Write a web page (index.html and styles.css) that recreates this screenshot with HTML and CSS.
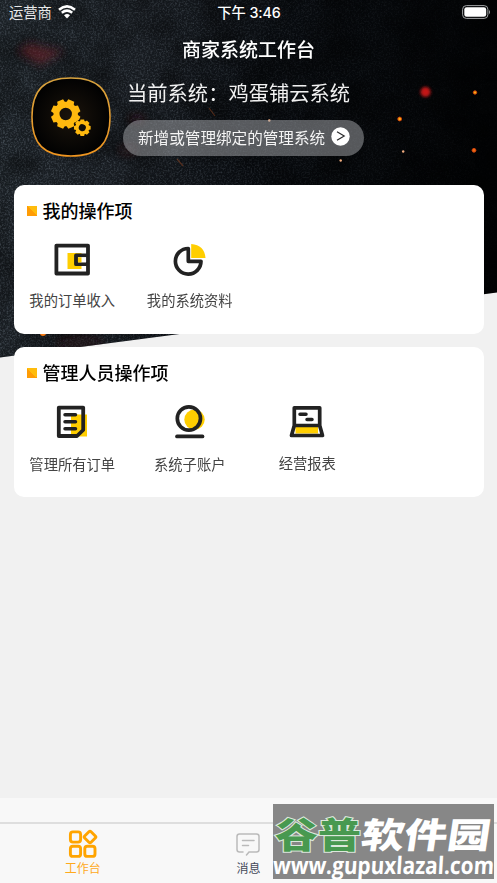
FILE: index.html
```html
<!DOCTYPE html>
<html lang="zh-CN">
<head>
<meta charset="utf-8">
<title>商家系统工作台</title>
<link rel="stylesheet" href="styles.css">
</head>
<body>
<div class="app">
  <svg class="scene" viewBox="0 0 497 360" aria-hidden="true">
    <defs>
      <linearGradient id="night" x1="0" y1="0" x2="1" y2="0.15">
        <stop offset="0" stop-color="#1c2227"/><stop offset=".3" stop-color="#171b20"/><stop offset=".55" stop-color="#090c10"/><stop offset="1" stop-color="#020304"/>
      </linearGradient>
      <linearGradient id="fade"><stop offset="0" stop-color="#aaa"/><stop offset=".35" stop-color="#777"/><stop offset=".65" stop-color="#333"/><stop offset="1" stop-color="#0a0a0a"/></linearGradient>
      <mask id="fademask"><rect width="497" height="360" fill="url(#fade)"/></mask>
      <clipPath id="slope"><path d="M0 0H497V292.5L0 357.5z"/></clipPath>
      <filter id="grain" x="0" y="0" width="100%" height="100%" color-interpolation-filters="sRGB">
        <feTurbulence type="fractalNoise" baseFrequency=".57" numOctaves="4" seed="4"/>
        <feColorMatrix values="0 0 0 0 .38  0 0 0 0 .42  0 0 0 0 .46  2 0 0 0 -.85"/>
      </filter>
      <filter id="cloud" x="0" y="0" width="100%" height="100%">
        <feTurbulence type="fractalNoise" baseFrequency=".025" numOctaves="3" seed="9"/>
        <feColorMatrix values="0 0 0 0 0  0 0 0 0 0  0 0 0 0 0  2 0 0 0 -.75"/>
      </filter>
      <filter id="soft" x="-50%" y="-50%" width="200%" height="200%"><feGaussianBlur stdDeviation="4"/></filter>
      <filter id="glow" x="-80%" y="-80%" width="260%" height="260%"><feGaussianBlur stdDeviation="1.7"/></filter>
    </defs>
    <g clip-path="url(#slope)">
      <rect width="497" height="360" fill="url(#night)"/>
      <g mask="url(#fademask)"><rect width="497" height="360" filter="url(#grain)"/></g>
      <rect width="497" height="360" filter="url(#cloud)" opacity=".5"/>
      <g filter="url(#soft)" fill="#7c2529">
        <path d="M18 51L30 43L46 48L64 51L40 65z" opacity=".5"/>
        <ellipse cx="128" cy="150" rx="9" ry="5" opacity=".2"/><ellipse cx="137" cy="119" rx="8" ry="3" opacity=".3"/>
        <ellipse cx="80" cy="343" rx="24" ry="5" opacity=".2"/>
      </g>
      <path d="M209 108l6 8M177 159l6 7" stroke="#87401f" stroke-width="1.2" opacity=".55"/>
      <circle cx="425.500" cy="92" r="5" fill="#c41914" filter="url(#glow)"/>
      <g fill="#ffac13" stroke="#cc420b">
        <circle cx="399.700" cy="119" r="1.900"/><circle cx="475" cy="92.500" r="1.700"/><circle cx="474" cy="150.300" r="1.900" fill="#ef6914"/>
      </g>
      <g fill="#f2ae80"><circle cx="269.300" cy="120.500" r="1.200"/><circle cx="340.700" cy="160.500" r="1.200"/><circle cx="403.200" cy="151.500" r="1.200"/></g>
      <circle cx="43" cy="333" r="3" fill="#f77b13"/>
    </g>
  </svg>

  <header class="status">
    <div class="carrier"><span>运营商</span>
      <svg width="18" height="14" viewBox="0 0 18 14" fill="none" stroke="#fff" stroke-width="2.500"><path d="M1 4.700Q9-2 17 4.700M3.800 7.800Q9 3.500 14.200 7.800"/><path d="M6 10.200Q9 7.600 12 10.200L9 13.400z" fill="#fff" stroke="none"/></svg>
    </div>
    <time>下午 3:46</time>
    <div class="power"><svg width="29" height="14" viewBox="0 0 29 14"><rect x=".6" y=".6" width="25.300" height="12.800" rx="3.700" fill="none" stroke="#a1a3a5"/><rect x="2.300" y="2.300" width="21.900" height="9.400" rx="2.300" fill="#fff"/><path d="M27 4.700q2 2.300 0 4.600z" fill="#a1a3a5"/></svg></div>
  </header>
  <h1>商家系统工作台</h1>

  <section class="profile">
    <svg class="avatar" width="80" height="80" viewBox="0 0 80 80">
      <defs>
        <linearGradient id="ring" x2="0" y2="1"><stop stop-color="#d8a33f"/><stop offset="1" stop-color="#f19620"/></linearGradient>
        <radialGradient id="plate"><stop stop-color="#1b140c"/><stop offset="1" stop-color="#020202"/></radialGradient>
        <path id="tooth" d="M-4.200-10L-3.200-14.600H3.200L4.200-10z"/>
        <g id="gear">
          <circle r="9.200" fill="none" stroke="#ffb90f" stroke-width="6"/>
          <g fill="#ffb90f"><use href="#tooth" transform="rotate(22.500)"/><use href="#tooth" transform="rotate(67.500)"/><use href="#tooth" transform="rotate(112.500)"/><use href="#tooth" transform="rotate(157.500)"/><use href="#tooth" transform="rotate(202.500)"/><use href="#tooth" transform="rotate(247.500)"/><use href="#tooth" transform="rotate(292.500)"/><use href="#tooth" transform="rotate(337.500)"/></g>
        </g>
      </defs>
      <path d="M40 1C67 1 79 13 79 40S67 79 40 79S1 67 1 40S13 1 40 1z" fill="url(#plate)" stroke="url(#ring)" stroke-width="1.500"/>
      <use href="#gear" transform="translate(34.700 37)"/>
      <circle cx="51.300" cy="50.700" r="8.500" fill="#110d08"/>
      <use href="#gear" transform="translate(51.300 50.700) rotate(22.500) scale(.57)"/>
    </svg>
    <div class="profile-info">
      <div class="system">当前系统：鸡蛋铺云系统</div>
      <div class="manage"><span>新增或管理绑定的管理系统</span>
        <svg width="19" height="19" viewBox="0 0 19 19"><circle cx="9.500" cy="9.500" r="9.200" fill="#fff"/><path d="M6 4.800L13.200 9L6 13.200" fill="none" stroke="#29292b" stroke-width="1.200"/></svg>
      </div>
    </div>
  </section>

  <main>
    <section class="card">
      <h2><i></i>我的操作项</h2>
      <div class="tiles">
        <div class="tile">
          <svg width="40" height="40" viewBox="0 0 40 40"><path d="M15.500 13H29.500V29H15.500z" fill="#ffce00"/><path d="M4.400 5.600H36V33.500H4.400zM36 15.400H24V24.200H36" fill="none" stroke="#222" stroke-width="3.800" stroke-linejoin="round"/><path d="M26 17.300H34V22.300H26z" fill="#fff"/><path d="M26 17.300H29.500V22.300H26z" fill="#ffce00"/></svg>
          <span>我的订单收入</span>
        </div>
        <div class="tile">
          <svg width="40" height="40" viewBox="0 0 40 40"><path d="M21.200 4Q34.500 5 35.500 18H21.200z" fill="#ffce00"/><path d="M18.300 8.500A12.800 12.800 0 1 0 31 21.300H18.300z" fill="none" stroke="#222" stroke-width="3.700" stroke-linejoin="round"/></svg>
          <span>我的系统资料</span>
        </div>
      </div>
    </section>
    <section class="card second">
      <h2><i></i>管理人员操作项</h2>
      <div class="tiles">
        <div class="tile">
          <svg width="40" height="40" viewBox="0 0 40 40"><path d="M19 12.500H35V34.500H19z" fill="#ffce00"/><path d="M6.800 5.600H31.200V28L25 34H6.800z" fill="none" stroke="#222" stroke-width="3.800" stroke-linejoin="round"/><path d="M13 12.700H23.500M13 19.700H23.500M13 26.700H23.500" stroke="#222" stroke-width="3.500" stroke-linecap="round"/></svg>
          <span>管理所有订单</span>
        </div>
        <div class="tile">
          <svg width="40" height="40" viewBox="0 0 40 40"><circle cx="24.500" cy="17.600" r="10.200" fill="#ffce00"/><circle cx="18.900" cy="16.500" r="11.600" fill="none" stroke="#222" stroke-width="3.700"/><path d="M7 34.400H32.500" stroke="#222" stroke-width="3.700" stroke-linecap="round"/></svg>
          <span>系统子账户</span>
        </div>
        <div class="tile report">
          <svg width="40" height="40" viewBox="0 0 40 40"><path d="M8.500 25H31V31.500H8.500z" fill="#ffce00"/><path d="M7.300 5.800H32.700V23.500L35.500 33.500H4.500L7.300 23.500zM7.300 23.500H32.700" fill="none" stroke="#222" stroke-width="3.700" stroke-linejoin="round"/><path d="M13 12.300H19M20 17.600H25" stroke="#222" stroke-width="3.500" stroke-linecap="round"/></svg>
          <span>经营报表</span>
        </div>
      </div>
    </section>
  </main>

  <footer>
    <nav>
      <div class="tab active">
        <svg width="30" height="30" viewBox="0 0 30 30" fill="none" stroke="#ffa400" stroke-width="2.900"><rect x="2.400" y="2.900" width="10.200" height="10.200" rx="2.500"/><rect x="2.400" y="17.200" width="10.200" height="10.200" rx="2.500"/><rect x="16.800" y="17.200" width="10.200" height="10.200" rx="2.500"/><rect x="17.500" y="3.500" width="9" height="9" rx="1.500" transform="rotate(45 22 8)"/></svg>
        <span>工作台</span>
      </div>
      <div class="tab">
        <svg width="30" height="30" viewBox="0 0 30 30" fill="none" stroke="#bababa" stroke-width="1.500" stroke-linecap="round"><path d="M10 23H6.500Q4 23 4 20.500V7.500Q4 5 6.500 5H23.500Q26 5 26 7.500V20.500Q26 23 23.500 23H16L13.500 26M9.500 11.500H21M9.500 16.500H15.500"/></svg>
        <span>消息</span>
      </div>
      <div class="tab"></div>
    </nav>
  </footer>

  <aside class="watermark">
    <div class="brand"><b>谷普</b><span>软件园</span></div>
    <div class="site"><span>www.gupuxlazal.com</span></div>
  </aside>
</div>
</body>
</html>
```
FILE: styles.css
```css
* { box-sizing: border-box; }
body { margin: 0; font-family: Inter, "Noto Sans CJK SC", sans-serif; background: #f1f1f1; }
svg { display: block; flex: none; }
.app { position: relative; width: 497px; height: 883px; overflow: hidden; display: flex; flex-direction: column; white-space: nowrap; }
.scene { position: absolute; top: 0; left: 0; width: 497px; height: 360px; }
.status, h1, .profile, main, footer { position: relative; }
.status { height: 24px; display: grid; grid-template-columns: 1fr auto 1fr; align-items: center; padding: 0 6px 0 9px; color: #fff; font-size: 14.300px; }
.status time { font-weight: 500; letter-spacing: -.1px; margin: 0 2px 2px 0; }
.carrier { display: flex; align-items: center; gap: 6px; color: #e8e9e9; }
.carrier span { margin-bottom: 2px; }
.power { display: flex; justify-content: flex-end; }
h1 { margin: 12px 0 0; height: 30px; line-height: 30px; text-align: center; color: #fff; font-size: 19px; font-weight: 500; }
.profile { height: 119px; padding: 11px 0 0 31px; display: flex; gap: 12px; }
.profile-info { display: flex; flex-direction: column; align-items: flex-start; }
.system { height: 31px; line-height: 33px; margin-left: 4px; font-size: 20.300px; color: #f1f1f1; }
.manage { height: 36px; width: 241px; margin-top: 12px; padding-left: 15px; border-radius: 18px; display: flex; align-items: center; gap: 6px; color: #f5f5f5; background: rgba(167,170,173,.5); font-size: 15.600px; }
.manage svg, .manage span { margin-bottom: 3px; }
main { padding: 0 13.500px; display: flex; flex-direction: column; gap: 13px; }
.card { height: 149px; border-radius: 10px; background: #fff; padding-top: 11px; }
.second { height: 150px; }
h2 { margin: 0; height: 28px; display: flex; align-items: center; gap: 6px; padding-left: 13px; font-size: 18px; font-weight: 500; color: #000; }
h2 i { width: 10px; height: 10px; margin-top: 2px; background: linear-gradient(45deg, #ff9c05 50%, #ffbc0c 50%); }
.tiles { display: grid; grid-template-columns: repeat(4, 1fr); padding-top: 16px; }
.tile { display: flex; flex-direction: column; align-items: center; gap: 11px; font-size: 14.300px; line-height: 20px; color: #444; }
.second .tile { gap: 13px; }
.second .report { gap: 12px; }
footer { margin-top: auto; height: 85px; padding-top: 24px; background: #f8f8f8; }
nav { border-top: 2px solid #dedede; height: 61px; display: grid; grid-template-columns: repeat(3, 1fr); }
.tab { display: flex; flex-direction: column; align-items: center; gap: 1px; padding-top: 5px; color: #444858; font-size: 12px; line-height: 18px; }
.active { color: #ffa91b; }
.watermark { position: absolute; left: 273px; top: 804px; width: 221px; height: 75px; background: #878787; }
.brand { height: 60px; display: flex; align-items: center; gap: 1px; padding-left: 2px; font-size: 43px; line-height: 56px; font-weight: 900; color: #fff; font-family: "Noto Sans CJK SC", sans-serif; transform: translateY(-2px) scaleY(.82); }
.brand b { color: #489950; font-weight: 900; -webkit-text-stroke: 2.500px #dce8dc; paint-order: stroke fill; }
.brand span { transform: skewX(-7deg); }
.site { height: 25px; margin-top: -12px; color: #fff; font: 700 24px/25px "Open Sans", sans-serif; }
.site span { display: inline-block; transform-origin: 0 50%; transform: scaleX(.865) skewX(-4deg); }
```
